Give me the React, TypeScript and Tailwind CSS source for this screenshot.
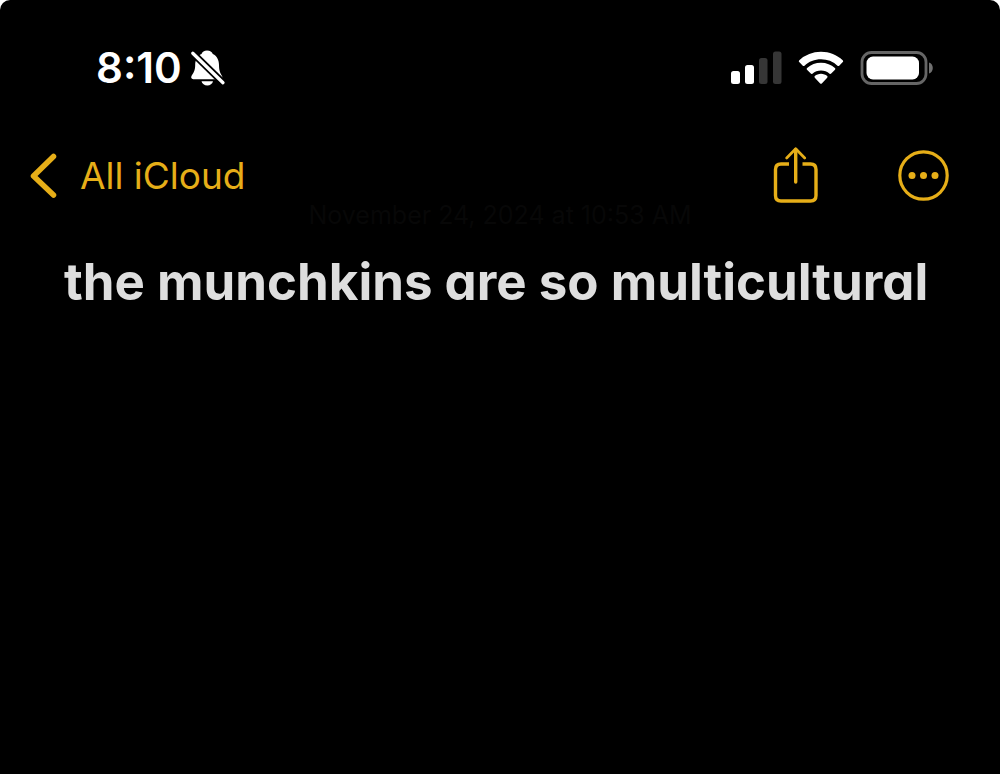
import React from "react";

function BellSlashIcon() {
  return (
    <svg width="36" height="38" viewBox="0 0 36 38" aria-hidden="true">
      <path
        d="M17 1.500c3 0 5 1.300 5.800 3.400C27 6.800 29 11 29 16c0 6 1.500 8.500 3 11 .8 1.300.3 3.200-1.300 3.200H3.200c-1.900 0-2.500-1.900-1.600-3.400C3.300 24 5.200 22 5.200 16c0-4.800 2-9.200 6.300-11.100C12.300 2.800 14.200 1.500 17 1.500z"
        fill="white"
      />
      <path d="M11.500 32.300h11.500c-.5 2.500-2.900 4.300-5.700 4.300S12 34.800 11.500 32.300z" fill="white" />
      <path d="M-1 .5 37 37.600" stroke="black" strokeWidth="7" />
      <path d="M2.800 4.200 33 33.700" stroke="white" strokeWidth="3.300" strokeLinecap="round" />
    </svg>
  );
}

function SignalIcon() {
  return (
    <svg width="52" height="34" viewBox="0 0 52 34" role="img" aria-label="Signal: two of four bars">
      <rect x="1" y="20" width="9" height="13" rx="2.500" fill="white" />
      <rect x="15" y="14" width="9" height="19" rx="2.500" fill="white" />
      <rect x="29" y="7" width="8.500" height="26" rx="2.500" fill="#363636" />
      <rect x="43" y="0.500" width="8.500" height="32.500" rx="2.500" fill="#363636" />
    </svg>
  );
}

function WifiIcon() {
  return (
    <svg width="46" height="34" viewBox="0 0 46 34" role="img" aria-label="Wi-Fi">
      <g fill="white">
        <path d="M23 .7c8.400 0 16 3.200 21.700 8.500.6.600.6 1.300.1 1.800l-3.600 3.700c-.5.500-1.200.5-1.700 0A24.200 24.200 0 0 0 23 8.300c-6.400 0-12.200 2.400-16.500 6.400-.5.500-1.200.5-1.700 0L1.200 11c-.5-.5-.5-1.200.1-1.800A31.700 31.700 0 0 1 23 .7z" />
        <path d="M23 11.800c5.400 0 10.200 2 13.900 5.300.6.500.6 1.200.1 1.700l-3.800 3.800c-.5.500-1.100.5-1.600.1a13 13 0 0 0-17.200 0c-.5.400-1.100.4-1.600-.1L9 18.800c-.5-.5-.5-1.200.1-1.700A20.800 20.800 0 0 1 23 11.800z" />
        <path d="M23 22.800c2.400 0 4.600.9 6.200 2.300.5.500.5 1.100 0 1.600l-5.400 5.700c-.5.500-1.100.5-1.600 0l-5.400-5.700c-.5-.5-.5-1.100 0-1.600 1.600-1.400 3.800-2.300 6.200-2.300z" />
      </g>
    </svg>
  );
}

function BatteryIcon() {
  return (
    <svg width="73" height="34" viewBox="0 0 73 34" role="img" aria-label="Battery">
      <rect x="2" y="1.500" width="64" height="31" rx="9.500" fill="none" stroke="#666" strokeWidth="2.800" />
      <rect x="6.500" y="5.500" width="52.500" height="23" rx="6.500" fill="white" />
      <path d="M69 11.500c2.400.8 3.800 2.900 3.800 5.500s-1.400 4.700-3.800 5.500z" fill="#707070" />
    </svg>
  );
}

function ChevronIcon() {
  return (
    <svg width="28" height="46" viewBox="0 0 28 46" aria-hidden="true">
      <path
        d="M23.500 3.500 3.500 23l20 19"
        fill="none"
        stroke="currentColor"
        strokeWidth="5.500"
        strokeLinecap="round"
        strokeLinejoin="round"
      />
    </svg>
  );
}

function ShareIcon() {
  return (
    <svg width="46" height="58" viewBox="0 0 46 58" aria-hidden="true">
      <g fill="none" stroke="currentColor" strokeWidth="3.400" strokeLinecap="round" strokeLinejoin="round">
        <path d="M17 17H9c-3.500 0-5.500 2-5.500 5.500v26c0 3.500 2 5.500 5.500 5.500h29.500c3.500 0 5.500-2 5.500-5.500v-26c0-3.500-2-5.500-5.500-5.500h-8" strokeLinecap="butt" />
        <path d="M23.700 2.500V35" />
        <path d="m14.700 11 9-9.300 9 9.300" strokeWidth="2.700" />
      </g>
    </svg>
  );
}

function MoreIcon() {
  return (
    <svg width="52" height="52" viewBox="0 0 52 52" aria-hidden="true">
      <circle cx="25.500" cy="25.500" r="23.700" fill="none" stroke="currentColor" strokeWidth="3.200" />
      <g fill="currentColor">
        <circle cx="14" cy="25.500" r="3.500" />
        <circle cx="25.500" cy="25.500" r="3.500" />
        <circle cx="37" cy="25.500" r="3.500" />
      </g>
    </svg>
  );
}

export default function App() {
  return (
    <div className="min-h-screen bg-white font-['Inter',sans-serif]">
      <div className="flex min-h-screen flex-col rounded-t-[10px] bg-black">
        <div className="flex items-center justify-between pt-12 pr-[67px] pl-24 text-white">
          <div className="flex items-center gap-2">
            <time className="text-[42px] leading-10 font-semibold">8:10</time>
            <BellSlashIcon />
          </div>
          <div className="flex items-center gap-4">
            <SignalIcon />
            <WifiIcon />
            <BatteryIcon />
          </div>
        </div>

        <header className="flex items-center justify-between pt-[59px] pr-[50px] pl-[30px] text-[#e6ae18]">
          <button type="button" className="flex items-center gap-[22px] text-[37px] leading-[58px]">
            <ChevronIcon />
            <span>All iCloud</span>
          </button>
          <div className="flex items-center gap-20">
            <button type="button" aria-label="Share">
              <ShareIcon />
            </button>
            <button type="button" aria-label="More">
              <MoreIcon />
            </button>
          </div>
        </header>

        <main className="px-16">
          <p className="text-center text-[25px] leading-5 text-[#070707]">
            November 24, 2024 at 10:53 AM
          </p>
          <h1 className="pt-[27px] text-[51px] leading-[60px] font-bold whitespace-nowrap text-[#dedede] [font-feature-settings:'cv11']">
            the munchkins are so multicultural
          </h1>
        </main>
      </div>
    </div>
  );
}
